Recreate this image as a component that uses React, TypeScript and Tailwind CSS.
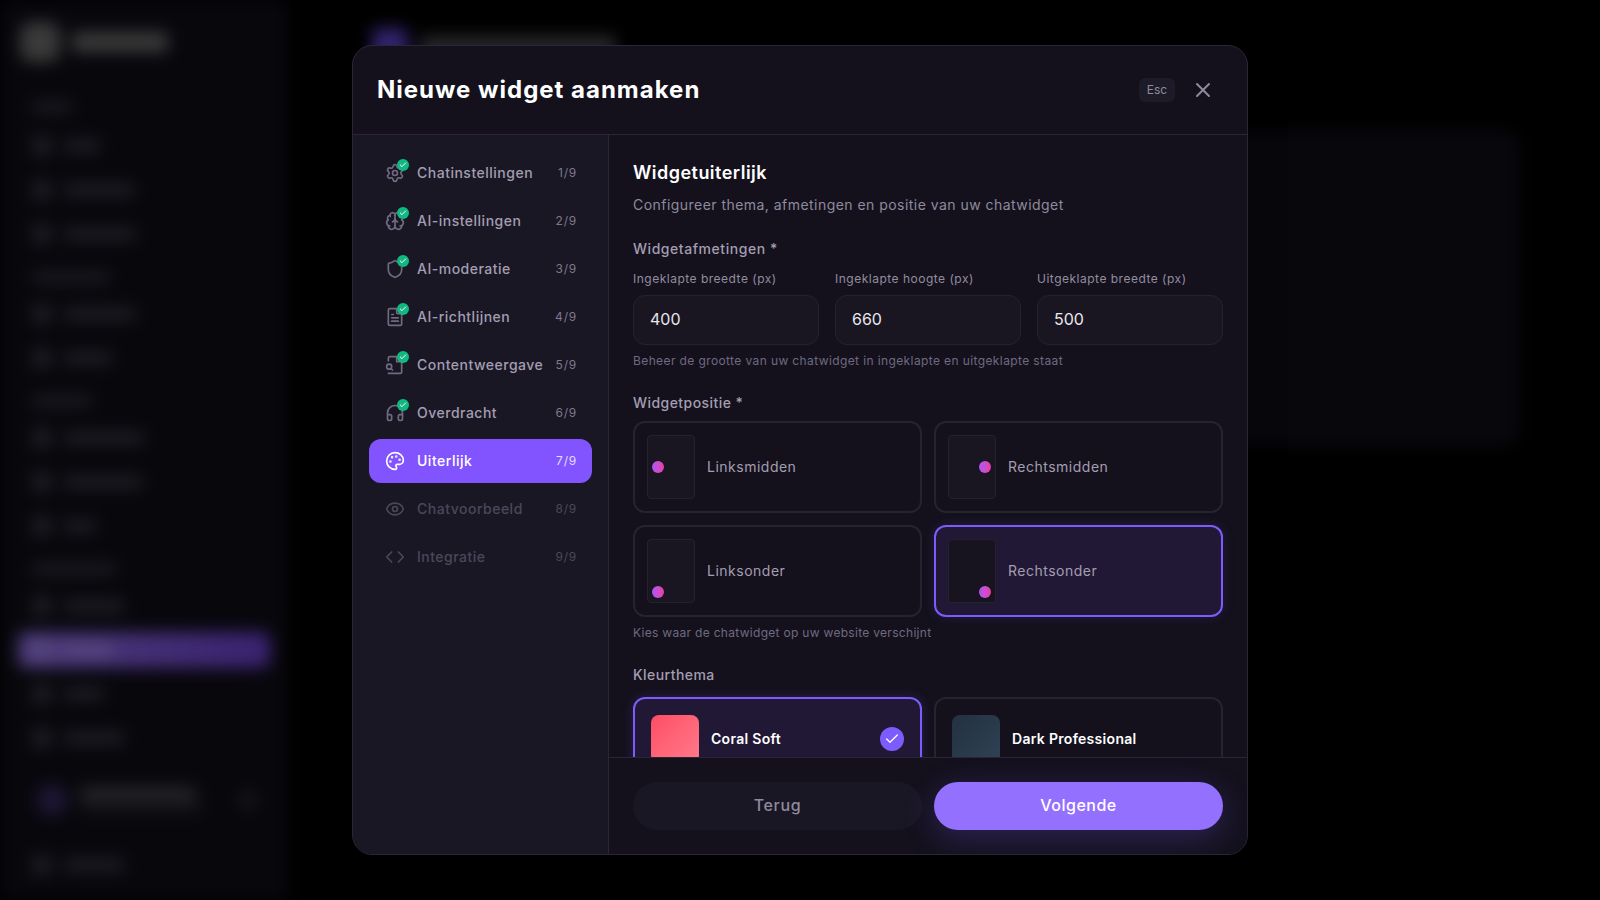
import React from "react";
import { Settings, Brain, Shield, FileText, Headphones, Palette, Eye, Code, X, Check } from "lucide-react";

function DocSearch({ size = 20, strokeWidth = 2, className = "" }: { size?: number; strokeWidth?: number; className?: string }) {
  return (
    <svg width={size} height={size} viewBox="0 0 24 24" fill="none" stroke="currentColor" strokeWidth={strokeWidth} strokeLinecap="round" strokeLinejoin="round" className={className}>
      <path d="M4 22h14a2 2 0 0 0 2-2V7.5L14.5 2H6a2 2 0 0 0-2 2v3" />
      <polyline points="14 2 14 8 20 8" />
      <path d="M5 17a3 3 0 1 0 0-6 3 3 0 0 0 0 6z" />
      <path d="m9 18-1.5-1.5" />
    </svg>
  );
}

const steps = [
  { label: "Chatinstellingen", icon: Settings, done: true },
  { label: "AI-instellingen", icon: Brain, done: true },
  { label: "AI-moderatie", icon: Shield, done: true },
  { label: "AI-richtlijnen", icon: FileText, done: true },
  { label: "Contentweergave", icon: DocSearch, done: true },
  { label: "Overdracht", icon: Headphones, done: true },
  { label: "Uiterlijk", icon: Palette, active: true },
  { label: "Chatvoorbeeld", icon: Eye, disabled: true },
  { label: "Integratie", icon: Code, disabled: true },
];

function Bar({ w }: { w: string }) {
  return (
    <div className="flex h-11 items-center gap-3 pl-8">
      <div className="h-5 w-5 rounded bg-[#1d1c22]" />
      <div className={`h-3.5 rounded bg-[#1d1c22] ${w}`} />
    </div>
  );
}

function Label({ w }: { w: string }) {
  return (
    <div className="mt-1.5 flex h-[30px] items-center pl-8">
      <div className={`h-3 rounded bg-[#1b1a20] ${w}`} />
    </div>
  );
}

function Background() {
  return (
    <div className="flex h-[900px] w-[1600px] overflow-hidden bg-black blur-[8px]">
      <div className="flex w-[288px] shrink-0 flex-col bg-[#08070c]">
        <div className="flex h-[84px] items-center gap-3 pl-5">
          <div className="h-10 w-10 rounded-xl bg-[#3a3a3a]" />
          <div className="h-5 w-24 rounded bg-[#3a3a3a]" />
        </div>
        <div className="mt-2 flex h-[30px] items-center pl-8"><div className="h-3 w-10 rounded bg-[#1b1a20]" /></div>
        <div className="h-0.5" />
        <Bar w="w-9" />
        <Bar w="w-[70px]" />
        <Bar w="w-[72px]" />
        <Label w="w-[78px]" />
        <Bar w="w-[72px]" />
        <Bar w="w-12" />
        <Label w="w-[60px]" />
        <Bar w="w-20" />
        <Bar w="w-[78px]" />
        <Bar w="w-8" />
        <Label w="w-[84px]" />
        <Bar w="w-[60px]" />
        <div className="mx-[18px] my-1 flex h-9 items-center gap-3 rounded-lg bg-[linear-gradient(90deg,#4b3a78,#3a2270)] pl-3.5">
          <div className="h-5 w-5 rounded bg-[#54457c]" />
          <div className="h-3.5 w-12 rounded bg-[#54457c]" />
        </div>
        <Bar w="w-10" />
        <Bar w="w-[60px]" />
        <div className="mt-4 flex h-12 items-center gap-3 pl-9 pr-8">
          <div className="h-8 w-8 rounded-full bg-[#1d1633]" />
          <div className="flex flex-col gap-1">
            <div className="h-3.5 w-[116px] rounded bg-[#27272a]" />
            <div className="h-2 w-[124px] rounded bg-[#16161a]" />
          </div>
          <div className="ml-auto h-4 w-4 rounded bg-[#19191d]" />
        </div>
        <div className="mt-[19px]"><Bar w="w-[60px]" /></div>
      </div>
      <div className="flex-1 px-[84px] pt-[34px]">
        <div className="flex h-6 items-center gap-3">
          <div className="h-9 w-9 rounded-lg bg-[#33246e]" />
          <div className="h-5 w-[196px] rounded bg-[#2a2a2e]" />
        </div>
        <div className="mt-[72px] ml-auto h-[316px] w-[1148px] rounded-2xl bg-[#08070c]" />
      </div>
    </div>
  );
}

function PosCard({ label, dot, selected }: { label: string; dot: string; selected?: boolean }) {
  return (
    <div className={`flex h-[92px] items-center gap-3 rounded-xl border-2 p-3 ${selected ? "border-[#7c5cfc] bg-[#211835] shadow-[0_0_12px_rgba(124,92,252,0.15)]" : "border-[#262331] bg-[#14111d]"}`}>
      <div className={`relative h-16 w-12 shrink-0 rounded border border-[#25222f] ${selected ? "bg-[#17141f]" : "bg-[#191621]"}`}>
        <div className={`absolute h-3 w-3 rounded-full bg-gradient-to-r from-[#a855f7] to-[#ec38a4] ${dot}`} />
      </div>
      <span className="pb-0.5 text-[14px] tracking-[0.5px] text-[#a39eb1]">{label}</span>
    </div>
  );
}

function Field({ label, value }: { label: string; value: string }) {
  return (
    <div className="flex flex-col gap-2">
      <label className="text-[12px] leading-4 tracking-[0.5px] text-[#928d9f]">{label}</label>
      <div className="flex h-[50px] items-center rounded-xl border border-[#25222f] bg-[#191621] px-4 pb-0.5 text-[16px] text-[#e8e6ee]">{value}</div>
    </div>
  );
}

export default function App() {
  return (
    <div className="relative h-[900px] w-[1600px] overflow-hidden bg-black font-['Inter',sans-serif]">
      <Background />
      <div className="absolute inset-0 flex items-center justify-center">
        <div className="flex h-[810px] w-[896px] flex-col overflow-hidden rounded-[20px] border border-[#2a2638] bg-[#14111d] shadow-2xl">
          <header className="flex h-[89px] shrink-0 items-center justify-between border-b border-[#2a2638] pl-6 pr-[32px]">
            <h1 className="text-[24px] font-bold tracking-[1px] text-white">Nieuwe widget aanmaken</h1>
            <div className="flex items-center gap-4">
              <span className="flex h-6 w-9 items-center justify-center rounded-md bg-[#1e1b29] text-[12px] text-[#8f8a9e]">Esc</span>
              <X size={24} className="text-[#8f8a9e]" strokeWidth={2} />
            </div>
          </header>
          <div className="flex min-h-0 flex-1">
            <nav className="flex w-64 shrink-0 flex-col gap-1 border-r border-[#2a2638] bg-[#1a1725] p-4">
              {steps.map((s, i) => {
                const Icon = s.icon;
                return (
                  <div key={s.label} className={`flex h-11 shrink-0 items-center rounded-xl px-4 ${s.active ? "bg-[#8254ff] text-white" : s.disabled ? "text-[#4b4759]" : "text-[#a39eb1]"}`}>
                    <div className="relative mr-3 h-5 w-5 shrink-0">
                      <Icon size={20} strokeWidth={2} className={s.active ? "text-white" : s.disabled ? "text-[#4b4759]" : "text-[#6f6a80]"} />
                      {s.done && (
                        <span className="absolute -right-1 -top-1 flex h-3 w-3 items-center justify-center rounded-full bg-[#10b981]">
                          <Check size={8} strokeWidth={3} className="text-white" />
                        </span>
                      )}
                    </div>
                    <span className="whitespace-nowrap pb-0.5 text-[14px] font-medium tracking-[0.5px]">{s.label}</span>
                    <span className={`-mr-px ml-auto text-[12px] tracking-[0.8px] ${s.active ? "text-[#e4dcff]" : s.disabled ? "text-[#4b4759]" : "text-[#7e798c]"}`}>{i + 1}/9</span>
                  </div>
                );
              })}
            </nav>
            <div className="flex min-w-0 flex-1 flex-col">
              <div className="min-h-0 flex-1 overflow-hidden px-6 pt-6">
                <h2 className="text-[18px] font-semibold leading-7 tracking-[0.47px] text-white">Widgetuiterlijk</h2>
                <p className="mt-2 text-[14px] leading-5 tracking-[0.46px] text-[#8f8a9e]">Configureer thema, afmetingen en positie van uw chatwidget</p>
                <div className="mt-6 text-[14px] font-medium leading-5 tracking-[0.55px] text-[#a39eb1]">Widgetafmetingen *</div>
                <div className="mt-3 grid grid-cols-3 gap-4">
                  <Field label="Ingeklapte breedte (px)" value="400" />
                  <Field label="Ingeklapte hoogte (px)" value="660" />
                  <Field label="Uitgeklapte breedte (px)" value="500" />
                </div>
                <p className="mt-2 text-[12px] leading-4 tracking-[0.39px] text-[#6f6a80]">Beheer de grootte van uw chatwidget in ingeklapte en uitgeklapte staat</p>
                <div className="mt-6 text-[14px] font-medium leading-5 tracking-[0.45px] text-[#a39eb1]">Widgetpositie *</div>
                <div className="mt-2 grid grid-cols-2 gap-3">
                  <PosCard label="Linksmidden" dot="left-1 top-1/2 -translate-y-1/2" />
                  <PosCard label="Rechtsmidden" dot="right-1 top-1/2 -translate-y-1/2" />
                  <PosCard label="Linksonder" dot="left-1 bottom-1" />
                  <PosCard label="Rechtsonder" dot="right-1 bottom-1" selected />
                </div>
                <p className="mt-2 text-[12px] leading-4 tracking-[0.3px] text-[#6f6a80]">Kies waar de chatwidget op uw website verschijnt</p>
                <div className="mt-6 text-[14px] font-medium leading-5 tracking-[0.45px] text-[#a39eb1]">Kleurthema</div>
                <div className="mt-3 grid grid-cols-2 gap-3">
                  <div className="flex items-center gap-3 rounded-xl border-2 border-[#7c5cfc] bg-[#211835] p-4 shadow-[0_0_12px_rgba(124,92,252,0.2)]">
                    <div className="h-12 w-12 shrink-0 rounded-lg bg-gradient-to-br from-[#ff4b66] to-[#ff7a8a]" />
                    <span className="pb-0.5 text-[14px] font-semibold tracking-[0.3px] text-white">Coral Soft</span>
                    <span className="ml-auto flex h-6 w-6 items-center justify-center rounded-full bg-[#7c5cfc]">
                      <Check size={16} strokeWidth={2} className="text-white" />
                    </span>
                  </div>
                  <div className="flex items-center gap-3 rounded-xl border-2 border-[#262331] bg-[#14111d] p-4">
                    <div className="h-12 w-12 shrink-0 rounded-lg bg-gradient-to-br from-[#233140] to-[#2f4254]" />
                    <span className="pb-0.5 text-[14px] font-semibold tracking-[0.3px] text-white">Dark Professional</span>
                  </div>
                </div>
              </div>
              <footer className="flex h-[97px] shrink-0 gap-3 border-t border-[#2a2638] bg-[#14111d] px-6 pt-6">
                <button className="h-12 flex-1 rounded-full bg-[#1a1725] pb-0.5 text-[16px] font-medium tracking-[0.6px] text-[#8f8a9e]">Terug</button>
                <button className="h-12 flex-1 rounded-full bg-[#9470ff] pb-0.5 text-[16px] font-medium tracking-[0.5px] text-white shadow-[0_8px_32px_rgba(124,92,252,0.25)]">Volgende</button>
              </footer>
            </div>
          </div>
        </div>
      </div>
    </div>
  );
}
